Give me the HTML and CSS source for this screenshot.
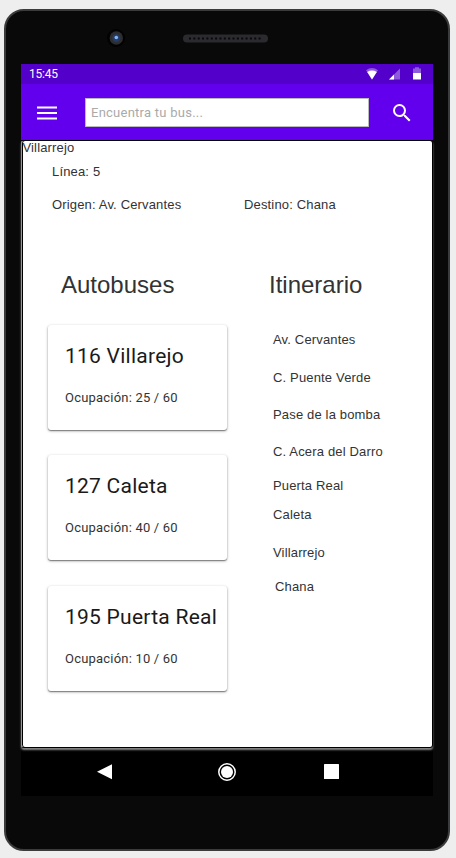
FILE: index.html
```html
<!DOCTYPE html>
<html lang="es">
<head>
<meta charset="utf-8">
<title>Línea 5</title>
<link rel="stylesheet" href="styles.css">
</head>
<body>
<div class="phone">
  <div class="phone-top">
    <svg class="camera" width="20" height="20" viewBox="0 0 20 20">
      <circle cx="10" cy="10" r="9" fill="#020202"/>
      <circle cx="10.3" cy="10" r="6.7" fill="#2c2d30"/>
      <circle cx="10.3" cy="10" r="4.2" fill="#34373d"/>
      <circle cx="10" cy="9.8" r="3.2" fill="#1c3d75"/>
      <circle cx="10.3" cy="9.5" r="1.8" fill="#8ab4ee"/>
    </svg>
    <svg class="speaker" width="86" height="9" viewBox="0 0 86 9">
      <rect x="1" y=".5" width="85" height="8" rx="4" fill="#2b2b2f"/>
      <path d="M7 4.500H80" stroke="#08080a" stroke-width="2" stroke-dasharray="2 2.350"/>
    </svg>
  </div>
  <div class="screen">
    <div class="status">
      <span class="clock">15:45</span>
      <svg width="60" height="20" viewBox="0 0 60 20">
        <path d="M1 6.200Q7 2 13 6.200L7 15.500Z" fill="#fff" opacity=".35"/>
        <path d="M2.200 8Q7 5.200 11.800 8L7 15.500Z" fill="#fff"/>
        <path d="M24 15.500L35 4.500V15.500Z" fill="#fff" opacity=".35"/>
        <path d="M24 15.500L29 10.500V15.500Z" fill="#fff"/>
        <path d="M48 9V4.500H50V3.200H54V4.500H56V9Z" fill="#fff" opacity=".35"/>
        <path d="M48 9H56V15.500H48Z" fill="#fff"/>
      </svg>
    </div>
    <div class="appbar">
      <svg class="menu" width="20" height="14" viewBox="0 0 20 14">
        <path d="M0 1.500H20M0 7H20M0 12.500H20" stroke="#fff" stroke-width="2"/>
      </svg>
      <input class="search" type="text" placeholder="Encuentra tu bus...">
      <svg width="24" height="24" viewBox="0 0 24 24">
        <path fill="#fff" d="M15.500 14h-.79l-.28-.27A6.471 6.471 0 0 0 16 9.500 6.500 6.500 0 1 0 9.500 16c1.610 0 3.090-.59 4.230-1.570l.27.28v.79l5 4.990L20.490 19l-4.990-5zm-6 0C7.010 14 5 11.990 5 9.500S7.010 5 9.500 5 14 7.010 14 9.500 11.990 14 9.500 14z"/>
      </svg>
    </div>
    <div class="content">
      <div class="title">Villarrejo</div>
      <div class="line">Línea: 5</div>
      <div class="route">
        <span class="origin">Origen: Av. Cervantes</span>
        <span class="dest">Destino: Chana</span>
      </div>
      <div class="columns">
        <div class="buses">
          <h2>Autobuses</h2>
          <div class="card"><h3>116 Villarejo</h3><p>Ocupación: 25 / 60</p></div>
          <div class="card"><h3>127 Caleta</h3><p>Ocupación: 40 / 60</p></div>
          <div class="card last"><h3>195 Puerta Real</h3><p>Ocupación: 10 / 60</p></div>
        </div>
        <div class="itinerary">
          <h2>Itinerario</h2>
          <ul>
            <li>Av. Cervantes</li>
            <li class="gap-22">C. Puente Verde</li>
            <li>Pase de la bomba</li>
            <li>C. Acera del Darro</li>
            <li class="gap-18">Puerta Real</li>
            <li class="gap-13">Caleta</li>
            <li class="gap-22">Villarrejo</li>
            <li class="gap-18 end">Chana</li>
          </ul>
        </div>
      </div>
    </div>
    <div class="nav">
      <svg width="412" height="48" viewBox="0 0 412 48">
        <path d="M91 16.300V31.300L76 23.800Z" fill="#fff"/>
        <circle cx="206" cy="24" r="8.200" fill="none" stroke="#fff" stroke-width="1.500"/>
        <circle cx="206" cy="24" r="6" fill="#fff"/>
        <rect x="303" y="16" width="15" height="15" rx=".5" fill="#fff"/>
      </svg>
    </div>
  </div>
</div>
</body>
</html>
```
FILE: styles.css
```css
* { box-sizing: border-box; }
body {
  margin: 0;
  padding: 9px 0 0 4px;
  height: 858px;
  overflow: hidden;
  background: #eee;
  font: 13px/16px "Liberation Sans", Arial, sans-serif;
  color: #333;
}
h2, h3, p, ul { margin: 0; padding: 0; font-weight: 400; }
.phone {
  width: 446px;
  height: 842px;
  border: 2px solid #3a3b3c;
  border-radius: 20px;
  background: #090909;
  padding-left: 15px;
}
.phone-top { height: 53px; display: flex; align-items: flex-start; }
.camera { margin: 17px 0 0 85px; }
.speaker { margin: 23px 0 0 56px; }
.screen { width: 412px; height: 732px; background: #000; }
.status {
  height: 20px;
  background: #5300ca;
  display: flex;
  justify-content: space-between;
  padding: 0 8px;
  color: #fff;
}
.clock { font: 12px/21px Roboto, sans-serif; letter-spacing: -.2px; }
.appbar {
  height: 56px;
  background: #6200ee;
  display: flex;
  align-items: center;
  padding-left: 16px;
}
.menu { margin-top: 2px; }
.search {
  width: 284px;
  height: 29px;
  margin: 1px 21px 0 28px;
  border: 1px solid #bbb;
  border-radius: 0;
  background: #fff;
  padding: 0 5px;
  font: 13px Roboto, sans-serif;
  letter-spacing: .25px;
}
.search::placeholder { color: #aaa; opacity: 1; }
.appbar > svg:last-child { margin-top: 2px; }
.content {
  height: 608px;
  border: 1px solid #000;
  border-left-color: #999;
  border-radius: 3px;
  background: #fff;
  box-shadow: inset 1px 0 #000, 0 2px 2px #888;
  letter-spacing: .16px;
}
.title { height: 14px; line-height: 14px; padding-left: .5px; letter-spacing: .15px; }
.line { margin: 9px 0 0 30px; }
.route { display: flex; margin: 17px 0 0 30px; }
.origin { width: 192px; }
.columns { display: flex; margin-top: 58px; }
.buses { width: 221px; padding-left: 26px; }
h2 { font-size: 24px; line-height: 28px; height: 54px; letter-spacing: 0; }
.buses h2 { padding-left: 13px; }
.itinerary { padding-left: 26px; }
.card {
  width: 179px;
  height: 105px;
  margin-bottom: 25px;
  padding: 16px 0 0 17px;
  border-radius: 3px;
  background: #fff;
  box-shadow: 0 1px 3px rgba(0,0,0,.35), 0 1px 1px rgba(0,0,0,.35);
  font-family: Roboto, sans-serif;
  color: #1a1a1a;
}
.last { margin-top: 26px; }
.card h3 { font-size: 21px; line-height: 30px; letter-spacing: .25px; }
.card p { margin-top: 19px; font-size: 13px; line-height: 16px; letter-spacing: .2px; color: #333; }
.itinerary ul { list-style: none; padding: 7px 0 0 4px; }
.itinerary li { margin-top: 21px; }
.itinerary li:first-child { margin-top: 0; }
.itinerary .gap-22 { margin-top: 22px; }
.itinerary .gap-18 { margin-top: 18px; }
.itinerary .gap-13 { margin-top: 13px; }
.end { padding-left: 2px; }
.nav { height: 48px; }
.nav svg { display: block; }
```
